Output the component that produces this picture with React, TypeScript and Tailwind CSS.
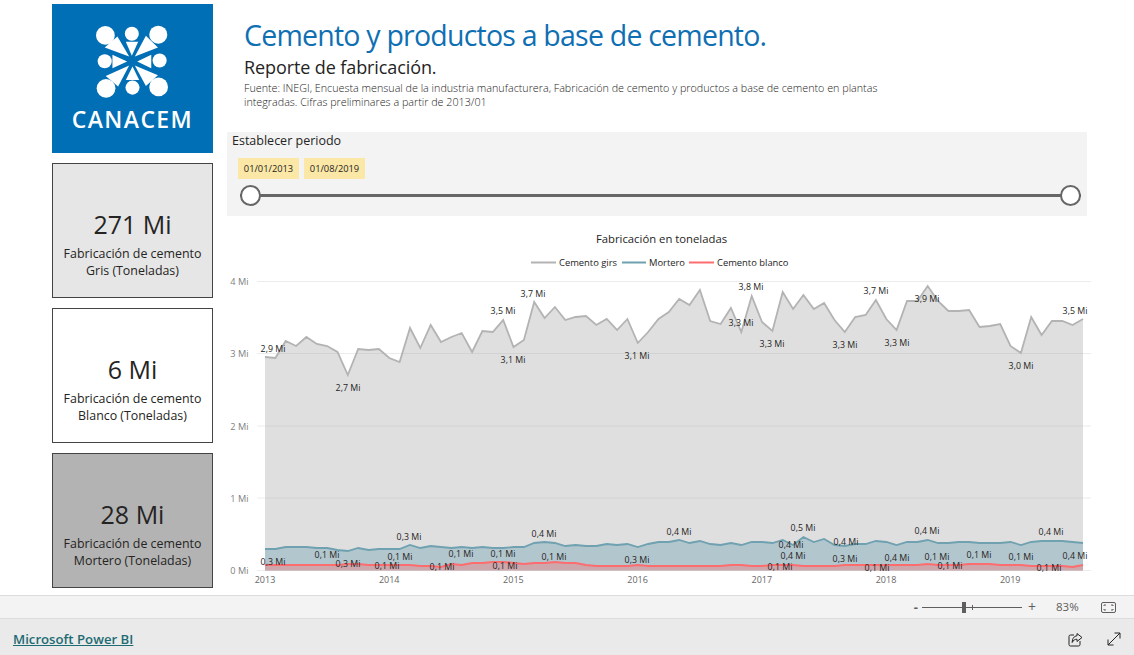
const STEP = (1083 - 265) / 79;

// y values read off the chart, one per month from 2013/01 to 2019/08
const GRIS = [
  357, 358, 341, 346, 337, 344, 346, 352, 375, 349, 350, 349, 358, 362, 328, 348, 325, 342, 337, 333,
  352, 331, 332, 320, 347, 340, 302, 318, 307, 320, 317, 316, 325, 319, 330, 319, 343, 332, 319, 312,
  299, 305, 290, 321, 324, 308, 332, 296, 322, 331, 292, 309, 295, 309, 303, 320, 332, 317, 315, 300,
  319, 330, 301, 301, 286, 301, 311, 311, 310, 327, 326, 324, 346, 353, 317, 335, 321, 321, 325, 319,
];

const MORTERO = [
  549, 549, 547, 547, 547, 548, 548, 550, 551, 548, 550, 549, 549, 549, 545, 548, 546, 547, 548, 547,
  548, 547, 548, 548, 547, 547, 543, 542, 543, 546, 545, 546, 546, 544, 545, 544, 547, 544, 542, 542,
  540, 543, 541, 544, 545, 543, 545, 542, 542, 543, 540, 545, 537, 542, 539, 545, 546, 544, 544, 541,
  542, 545, 542, 542, 540, 543, 543, 542, 542, 543, 543, 543, 542, 545, 542, 541, 541, 541, 542, 543,
];

const BLANCO = [
  565, 565, 565, 565, 565, 565, 565, 565, 564, 564, 565, 565, 565, 565, 565, 566, 566, 567, 564, 565,
  563, 563, 562, 562, 563, 564, 563, 563, 562, 563, 563, 565, 566, 566, 566, 566, 565, 566, 566, 566,
  566, 566, 566, 566, 566, 565, 565, 566, 566, 565, 565, 565, 566, 566, 566, 566, 565, 565, 565, 565,
  565, 565, 565, 565, 564, 565, 565, 565, 564, 564, 564, 565, 565, 565, 566, 566, 566, 566, 567, 565,
];

const BASE = 570.5;

const LABELS: [string, number, number][] = [
  ["2,9 Mi", 273, 348], ["2,7 Mi", 348, 387], ["3,5 Mi", 503, 310], ["3,1 Mi", 513, 359],
  ["3,7 Mi", 533, 293], ["3,1 Mi", 637, 355], ["3,8 Mi", 751, 286], ["3,3 Mi", 741, 322],
  ["3,3 Mi", 772, 343], ["3,3 Mi", 845, 344], ["3,7 Mi", 876, 290], ["3,3 Mi", 897, 342],
  ["3,9 Mi", 927, 298], ["3,0 Mi", 1021, 365], ["3,5 Mi", 1075, 310],
  ["0,3 Mi", 273, 561], ["0,1 Mi", 327, 554], ["0,3 Mi", 348, 563], ["0,3 Mi", 409, 536],
  ["0,1 Mi", 400, 556], ["0,1 Mi", 387, 565], ["0,1 Mi", 442, 566], ["0,1 Mi", 461, 553],
  ["0,1 Mi", 503, 553], ["0,1 Mi", 505, 565], ["0,4 Mi", 544, 533], ["0,1 Mi", 554, 556],
  ["0,3 Mi", 637, 559], ["0,4 Mi", 679, 531], ["0,5 Mi", 803, 527], ["0,4 Mi", 791, 544],
  ["0,4 Mi", 793, 555], ["0,1 Mi", 780, 566], ["0,4 Mi", 846, 541], ["0,3 Mi", 845, 558],
  ["0,1 Mi", 877, 567], ["0,4 Mi", 897, 557], ["0,4 Mi", 927, 530], ["0,1 Mi", 937, 556],
  ["0,1 Mi", 950, 565], ["0,1 Mi", 979, 554], ["0,1 Mi", 1021, 556], ["0,1 Mi", 1049, 567],
  ["0,4 Mi", 1051, 531], ["0,4 Mi", 1075, 555],
];

function linePoints(values: number[]) {
  return values.map((y, i) => `${(265 + i * STEP).toFixed(1)},${y}`).join(" ");
}

function areaPoints(values: number[]) {
  return `265,${BASE} ${linePoints(values)} 1083,${BASE}`;
}

function CanacemLogo() {
  return (
    <div className="flex h-[149px] w-[161px] flex-col items-center bg-[#006fb5] text-white">
      <svg viewBox="160 70 236 230" width="79" height="77" className="mt-[19px]" fill="white">
        <circle cx="197" cy="107" r="28" />
        <circle cx="276" cy="102" r="21" />
        <circle cx="355" cy="105" r="27" />
        <circle cx="195" cy="184" r="21" />
        <circle cx="359" cy="182" r="21" />
        <circle cx="199" cy="265" r="28" />
        <circle cx="278" cy="263" r="21" />
        <circle cx="356" cy="261" r="28" />
        <polygon points="258,126 295,126 276,168" />
        <polygon points="218,165 218,205 262,185" />
        <polygon points="334,165 334,205 292,185" />
        <polygon points="278,200 258,240 298,240" />
        <polygon points="233,110 195,143 268,170" />
        <polygon points="318,108 354,143 285,170" />
        <polygon points="198,228 235,260 268,197" />
        <polygon points="285,197 318,258 354,226" />
      </svg>
      <div className="mt-[6px] text-[23px] leading-[26px] font-semibold tracking-[1.4px]">CANACEM</div>
    </div>
  );
}

interface KpiCardProps {
  value: string;
  line1: string;
  line2: string;
  bg: string;
}

function KpiCard({ value, line1, line2, bg }: KpiCardProps) {
  return (
    <div className={`flex h-[135px] w-[161px] flex-col items-center border border-[#444] pt-[42px] text-[#252423] ${bg}`}>
      <div className="text-[25px] leading-[36px]">{value}</div>
      <div className="mt-[3px] text-center text-[12.4px] leading-[17px]">
        {line1}
        <br />
        {line2}
      </div>
    </div>
  );
}

function DateChip({ children }: { children: string }) {
  return (
    <div className="flex h-[21px] w-[61px] items-center justify-center bg-[#fbe8a6] text-[9.3px] text-[#252423]">
      {children}
    </div>
  );
}

function PeriodSlicer() {
  return (
    <div className="flex h-[84px] flex-col bg-[#f3f3f3] px-[5px]">
      <div className="text-[12.5px] leading-[18px] text-[#252423]">Establecer periodo</div>
      <div className="mt-[8px] ml-[6px] flex gap-[5px]">
        <DateChip>01/01/2013</DateChip>
        <DateChip>01/08/2019</DateChip>
      </div>
      <div className="relative mt-[6px] ml-[8px] flex h-[20px] w-[841px] items-center">
        <div className="h-[3px] w-full bg-[#666]" />
        <div className="absolute left-0 h-[21px] w-[21px] rounded-full border-2 border-[#666] bg-white" />
        <div className="absolute right-0 h-[21px] w-[21px] rounded-full border-2 border-[#666] bg-white" />
      </div>
    </div>
  );
}

function ProductionChart() {
  return (
    <svg viewBox="227 228 868 362" width="868" height="362" className="mt-[12px] block">
      <text x="661.5" y="243" textAnchor="middle" fontSize="11.3" fill="#252423">Fabricación en toneladas</text>

      <line x1="531" x2="556" y1="262.5" y2="262.5" stroke="#b3b3b3" strokeWidth="2" />
      <text x="559" y="266" fontSize="9.4" fill="#252423">Cemento girs</text>
      <line x1="622" x2="646" y1="262.5" y2="262.5" stroke="#6fa1b1" strokeWidth="2" />
      <text x="649" y="266" fontSize="9.4" fill="#252423">Mortero</text>
      <line x1="689" x2="714" y1="262.5" y2="262.5" stroke="#fd6d6f" strokeWidth="2" />
      <text x="717" y="266" fontSize="9.4" fill="#252423">Cemento blanco</text>

      {[281.5, 353.5, 426, 498, 570.5].map((y, i) => (
        <g key={y}>
          <line x1="257" x2="1091" y1={y} y2={y} stroke="#ececec" />
          <text x="248.5" y={y + 3.5} textAnchor="end" fontSize="9.2" fill="#808080">{`${4 - i} Mi`}</text>
        </g>
      ))}

      <polygon points={areaPoints(GRIS)} fill="#9a9a9a" fillOpacity="0.32" />
      <polyline points={linePoints(GRIS)} fill="none" stroke="#b3b3b3" strokeWidth="1.8" />
      <polygon points={areaPoints(MORTERO)} fill="#6fa1b1" fillOpacity="0.4" />
      <polyline points={linePoints(MORTERO)} fill="none" stroke="#6fa1b1" strokeWidth="1.8" />
      <polygon points={areaPoints(BLANCO)} fill="#fd6d6f" fillOpacity="0.35" />
      <polyline points={linePoints(BLANCO)} fill="none" stroke="#fd6d6f" strokeWidth="2.2" />

      {["2013", "2014", "2015", "2016", "2017", "2018", "2019"].map((year, i) => (
        <text key={year} x={265 + i * 124.2} y="582.5" textAnchor="middle" fontSize="9" fill="#666">{year}</text>
      ))}

      {LABELS.map(([text, x, y], i) => (
        <text key={i} x={x} y={y + 3.8} textAnchor="middle" fontSize="8.8" fill="#252423">{text}</text>
      ))}
    </svg>
  );
}

function ZoomBar() {
  return (
    <div className="flex h-[24px] items-center justify-end border-y border-[#dcdcdc] bg-[#f3f3f3] text-[#605e5c]">
      <span className="text-[13px] leading-none font-bold">-</span>
      <div className="relative mx-[4px] flex h-[12px] w-[100px] items-center">
        <div className="h-px w-full bg-[#605e5c]" />
        <div className="absolute left-[40px] h-[11px] w-[4px] bg-[#605e5c]" />
        <div className="absolute left-[50px] h-[5px] w-px bg-[#605e5c]" />
      </div>
      <span className="ml-[2px] text-[14px] leading-none">+</span>
      <span className="ml-[20px] w-[24px] text-[11.5px]">83%</span>
      <svg className="mr-[18px] ml-[21px]" width="15" height="11" viewBox="0 0 15 11" fill="none" stroke="#605e5c">
        <rect x="0.5" y="0.5" width="14" height="10" rx="1.5" />
        <path d="M3 4V3h2M10 3h2v1M3 7v1h2M10 8h2V7" />
      </svg>
    </div>
  );
}

function ReportFooter() {
  return (
    <div className="flex h-[36px] items-center bg-[#eaeaea] pt-[4px] pr-[13px] pl-[13px]">
      <span className="mt-[1px] text-[13.2px] font-semibold text-[#1d6b73] underline">Microsoft Power BI</span>
      <svg className="mr-[24px] ml-auto" width="15" height="15" viewBox="0 0 15 15" fill="none" stroke="#252423">
        <path d="M6 3H2.5A1.5 1.5 0 0 0 1 4.5v8A1.5 1.5 0 0 0 2.5 14h8a1.5 1.5 0 0 0 1.5-1.5V9" />
        <path d="M9 1.5 14 5.5 9 9.5V7.2C6.8 7.2 5.2 8.2 4.2 10.5 4.2 6.8 6 4 9 3.8Z" />
      </svg>
      <svg width="14" height="14" viewBox="0 0 14 14" fill="none" stroke="#252423">
        <path d="M1 13 13 1M7.5 1H13V6.5M1 7.5V13H6.5" />
      </svg>
    </div>
  );
}

export default function App() {
  return (
    <div className="flex h-[655px] w-[1134px] flex-col overflow-hidden bg-white font-['Open_Sans',sans-serif]">
      <div className="flex h-[595px] pt-[4px] pl-[52px]">
        <div className="flex w-[161px] flex-col">
          <CanacemLogo />
          <div className="mt-[10px] flex flex-col gap-[10px]">
            <KpiCard value="271 Mi" line1="Fabricación de cemento" line2="Gris (Toneladas)" bg="bg-[#e6e6e6]" />
            <KpiCard value="6 Mi" line1="Fabricación de cemento" line2="Blanco (Toneladas)" bg="bg-white" />
            <KpiCard value="28 Mi" line1="Fabricación de cemento" line2="Mortero (Toneladas)" bg="bg-[#b3b3b3]" />
          </div>
        </div>
        <div className="ml-[14px] flex w-[860px] flex-col">
          <div className="h-[128px] pt-[11px] pl-[17px]">
            <h1 className="text-[28.5px] leading-[40px] font-normal tracking-[-0.78px] text-[#0f6fb3]">
              Cemento y productos a base de cemento.
            </h1>
            <div className="text-[18px] leading-[24px] tracking-[-0.1px] text-[#252423]">Reporte de fabricación.</div>
            <p className="mt-[2px] w-[650px] text-[10.75px] leading-[14px] font-light text-[#252423]">
              Fuente: INEGI, Encuesta mensual de la industria manufacturera, Fabricación de cemento y productos a base de cemento en plantas integradas. Cifras preliminares a partir de 2013/01
            </p>
          </div>
          <PeriodSlicer />
          <ProductionChart />
        </div>
      </div>
      <ZoomBar />
      <ReportFooter />
    </div>
  );
}
